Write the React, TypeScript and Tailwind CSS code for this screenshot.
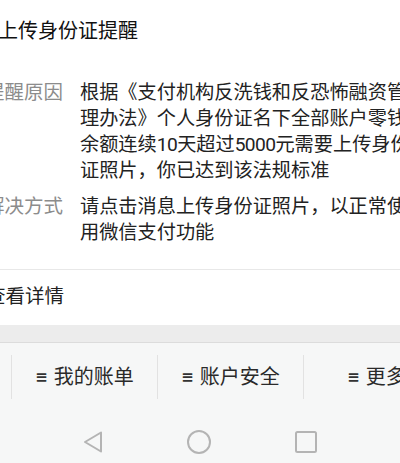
const font = { fontFamily: 'Roboto, "Noto Sans CJK SC", sans-serif' };

const reasonLines = [
  "根据《支付机构反洗钱和反恐怖融资管",
  "理办法》个人身份证名下全部账户零钱",
  "余额连续10天超过5000元需要上传身份",
  "证照片，你已达到该法规标准",
];

const solveLines = ["请点击消息上传身份证照片，以正常使", "用微信支付功能"];

// digits in the reference are a bit narrower than Roboto's
const Line = ({ text }: { text: string }) => (
  <div className="whitespace-nowrap">
    {text.split(/(\d+)/).map((part, i) =>
      /^\d+$/.test(part) ? (
        <span key={i} className="tracking-[-0.6px]">
          {part}
        </span>
      ) : (
        <span key={i}>{part}</span>
      )
    )}
  </div>
);

const InfoRow = ({ label, lines, className = "" }: { label: string; lines: string[]; className?: string }) => (
  <div className={`flex ${className}`}>
    <div className="ml-[-15px] w-[95px] shrink-0 text-[19.5px] leading-[26px] text-[#8c8c8c] whitespace-nowrap">{label}</div>
    <div className="text-[19.2px] leading-[26px] text-[#222]">
      {lines.map((l) => (
        <Line key={l} text={l} />
      ))}
    </div>
  </div>
);

const menuItems = ["零钱明细", "我的账单", "账户安全", "更多"];

export default function App() {
  return (
    <div className="w-[400px] h-[463px] overflow-hidden bg-white flex flex-col" style={font}>
      <div className="pt-[19px] ml-[-2px] text-[20px] leading-[24px] text-[#111] whitespace-nowrap">上传身份证提醒</div>

      <InfoRow label="提醒原因" lines={reasonLines} className="mt-[37px]" />
      <InfoRow label="解决方式" lines={solveLines} className="mt-[10px]" />

      <div className="mt-[23px] border-t border-[#e8e8e8]" />
      <div className="mt-[14px] ml-[-14px] text-[19.5px] leading-[26px] text-[#222] whitespace-nowrap">查看详情</div>

      <div className="mt-[15px] h-[18px] bg-[#ececec] border-b border-[#dcdcdc]" />

      <div className="flex-1 bg-[#f6f7f7] flex flex-col">
        <div className="mt-[12px] h-[44px] flex ml-[-135px]">
          {menuItems.map((m, i) => (
            <div
              key={m}
              className={`w-[146px] shrink-0 flex items-center justify-center whitespace-nowrap ${i > 0 ? "border-l border-[#e2e2e2]" : ""}`}
            >
              <span className="text-[15px] font-bold text-[#333] mr-[6px]" style={{ fontFamily: '"DejaVu Sans", sans-serif' }}>
                ≡
              </span>
              <span className="text-[20px] text-[#2a2a2a]">{m}</span>
            </div>
          ))}
        </div>

        <div className="flex-1 flex items-center justify-center gap-[82px] pt-[22px]">
          <svg width="22" height="24" viewBox="0 0 22 24" fill="none" stroke="#b4b4b4" strokeWidth="2" strokeLinejoin="round">
            <path d="M19 2.5 L3 12 L19 21.5 Z" />
          </svg>
          <svg width="26" height="26" viewBox="0 0 26 26" fill="none" stroke="#b4b4b4" strokeWidth="2">
            <circle cx="13" cy="13" r="11" />
          </svg>
          <svg width="24" height="24" viewBox="0 0 24 24" fill="none" stroke="#b4b4b4" strokeWidth="2">
            <rect x="2" y="2" width="20" height="20" rx="1.5" />
          </svg>
        </div>
      </div>
    </div>
  );
}
